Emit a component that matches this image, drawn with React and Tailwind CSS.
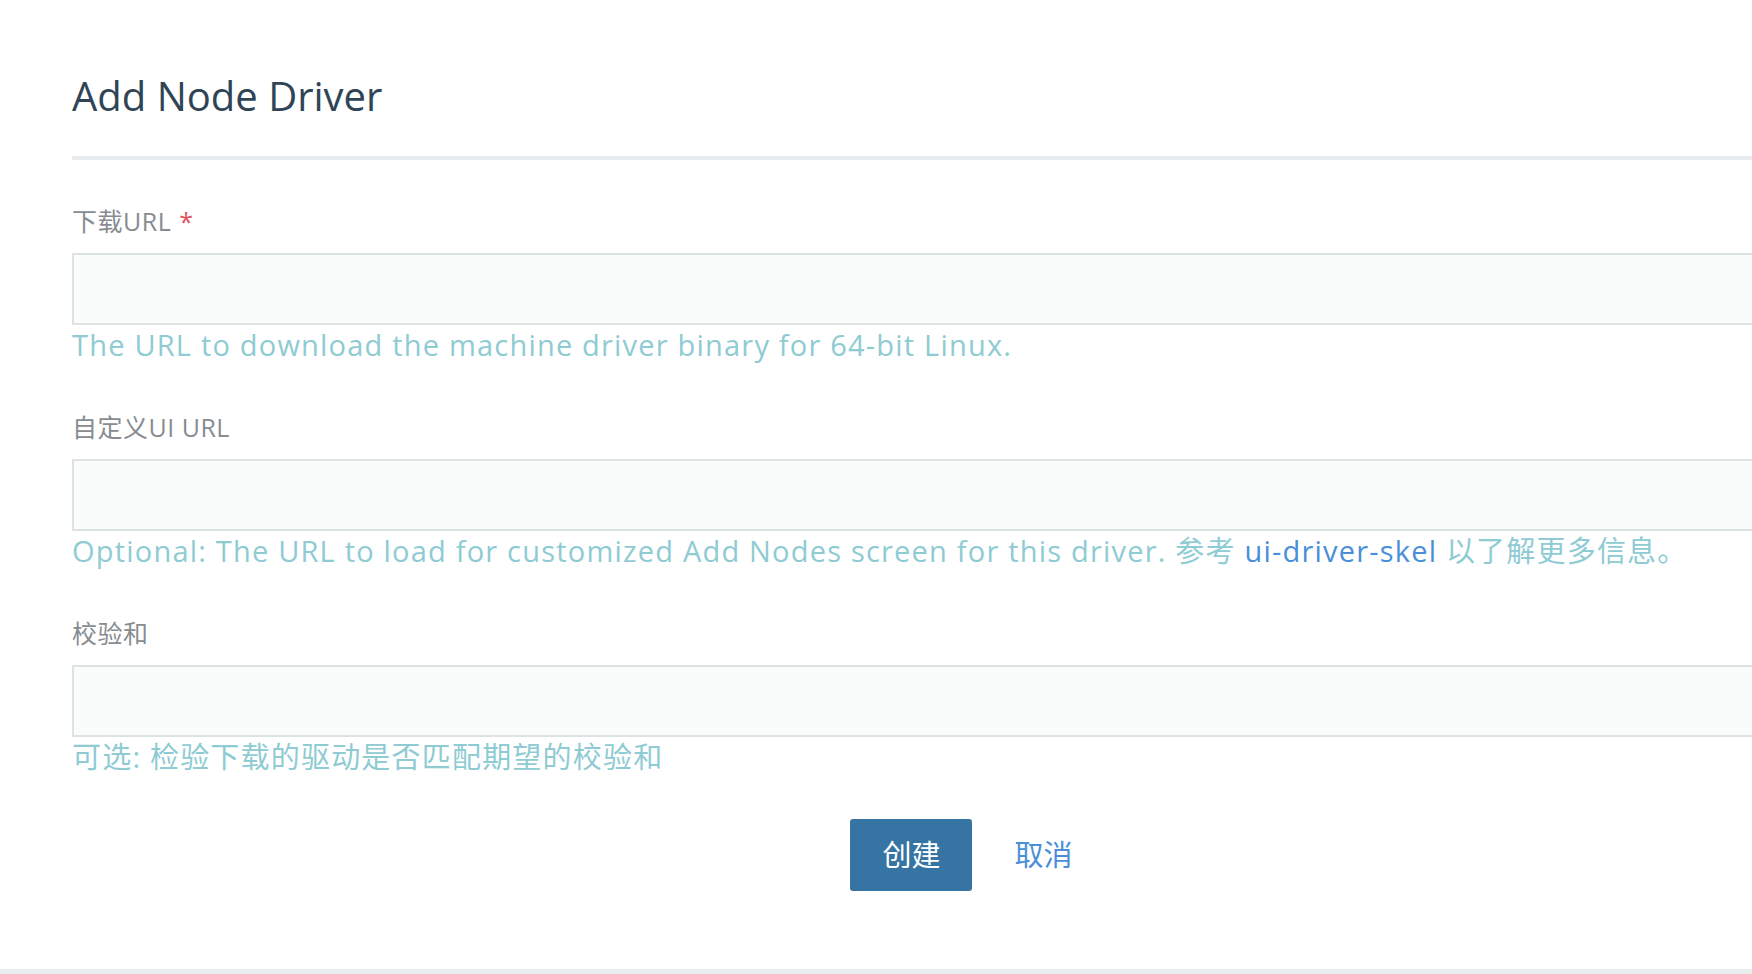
const fieldClass =
  "block w-full h-[72px] border-2 border-[#dde2e5] bg-[#fafbfb] outline-none";

const Field = ({ label, required, help }) => (
  <div>
    <label className="block text-[25px] tracking-[0.5px] leading-[30px] text-[#878c90] mb-[17px]">
      {label}
      {required && <span className="ml-[8px] text-[#e0525a]">*</span>}
    </label>
    <input type="text" className={fieldClass} />
    <p className="text-[29px] tracking-[1.2px] leading-[40px] text-[#8ecbd3]">
      {help}
    </p>
  </div>
);

export default function App() {
  return (
    <div
      className="relative w-full h-[974px] overflow-hidden bg-white"
      style={{ fontFamily: '"Open Sans", "Noto Sans CJK SC", sans-serif' }}
    >
      <div className="w-[1851px] pl-[72px] pt-[68px]">
        <h1 className="text-[40px] leading-[56px] text-[#2f4556] font-normal">
          Add Node Driver
        </h1>
        <div className="h-[4px] bg-[#e9ecee] mt-[32px] mb-[46px]" />

        <div className="flex flex-col gap-[47px]">
          <Field
            label="下载URL"
            required
            help="The URL to download the machine driver binary for 64-bit Linux."
          />
          <Field
            label="自定义UI URL"
            help={
              <>
                Optional: The URL to load for customized Add Nodes screen for
                this driver. 参考{" "}
                <a className="text-[#4a8fd8]" href="#">
                  ui-driver-skel
                </a>{" "}
                以了解更多信息。
              </>
            }
          />
          <Field label="校验和" help="可选: 检验下载的驱动是否匹配期望的校验和" />
        </div>

        <div className="flex justify-center items-center gap-[42px] mt-[42px]">
          <button className="w-[122px] h-[72px] rounded-[3px] bg-[#3674a3] text-white text-[29px]">
            创建
          </button>
          <button className="text-[29px] text-[#4a8fd8]">取消</button>
        </div>
      </div>
      <div className="absolute left-0 right-0 bottom-0 h-[5px] bg-[#e9eded]" />
    </div>
  );
}
